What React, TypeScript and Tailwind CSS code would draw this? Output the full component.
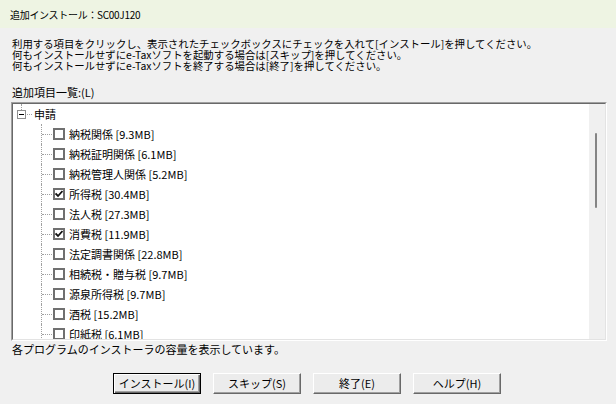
import React from "react";

type Item = { label: string; size: string; checked?: boolean };

const items: Item[] = [
  { label: "納税関係", size: "9.3MB" },
  { label: "納税証明関係", size: "6.1MB" },
  { label: "納税管理人関係", size: "5.2MB" },
  { label: "所得税", size: "30.4MB", checked: true },
  { label: "法人税", size: "27.3MB" },
  { label: "消費税", size: "11.9MB", checked: true },
  { label: "法定調書関係", size: "22.8MB" },
  { label: "相続税・贈与税", size: "9.7MB" },
  { label: "源泉所得税", size: "9.7MB" },
  { label: "酒税", size: "15.2MB" },
  { label: "印紙税", size: "6.1MB" },
];

function CheckBox({ checked }: { checked?: boolean }) {
  return (
    <div className="flex h-[12px] w-[12px] shrink-0 items-center justify-center border-2 border-[#707070] bg-white">
      {checked && (
        <svg width="8" height="8" viewBox="0 0 8 8">
          <path d="M0.5 3.5 L3 6 L7.5 1" fill="none" stroke="#111" strokeWidth="1.8" />
        </svg>
      )}
    </div>
  );
}

function Button({ label, primary }: { label: string; primary?: boolean }) {
  return (
    <button
      className={
        primary
          ? "h-[21px] w-[88px] border border-black bg-[#ececec] text-[11px] leading-none text-black shadow-[inset_1px_1px_0_#ffffff,inset_-1px_-1px_0_#696969,inset_-2px_-2px_0_#a0a0a0]"
          : "h-[21px] w-[88px] border border-t-white border-l-white border-r-[#696969] border-b-[#696969] bg-[#ececec] text-[11px] leading-none text-black shadow-[inset_-1px_-1px_0_#a0a0a0]"
      }
    >
      {label}
    </button>
  );
}

export default function App() {
  return (
    <div
      className="flex h-[404px] w-[616px] flex-col overflow-hidden bg-[#f0f0f0] text-black"
      style={{ fontFamily: '"Noto Sans CJK JP", "Noto Sans", sans-serif' }}
    >
      {/* title bar */}
      <div className="flex h-[28px] shrink-0 items-center bg-[#eef4e3] pl-[10px] text-[10px] tracking-[-0.3px]">
        追加インストール：SC00J120
      </div>

      {/* instructions */}
      <div className="mt-[10px] whitespace-nowrap pl-[12px] text-[10.4px] leading-[11px]">
        <p>利用する項目をクリックし、表示されたチェックボックスにチェックを入れて[インストール]を押してください。</p>
        <p>何もインストールせずにe-Taxソフトを起動する場合は[スキップ]を押してください。</p>
        <p>何もインストールせずにe-Taxソフトを終了する場合は[終了]を押してください。</p>
      </div>

      <div className="mt-[16px] pl-[12px] text-[11px] leading-[11px]">追加項目一覧:(L)</div>

      {/* tree box */}
      <div className="ml-[11px] mt-[4px] h-[239px] w-[596px] shrink-0 border border-t-[#a0a0a0] border-l-[#a0a0a0] border-r-white border-b-white">
        <div className="flex h-full w-full border border-t-[#696969] border-l-[#696969] border-r-[#e3e3e3] border-b-[#e3e3e3] bg-white">
          <div className="flex-1 overflow-hidden text-[11px]">
            {/* root node */}
            <div className="flex h-[20px] items-center pl-[4px]">
              <div className="relative flex h-[9px] w-[9px] items-center justify-center border border-[#8f8f8f] bg-white">
                <div className="absolute bottom-[8px] left-[3px] h-[6px] border-l border-dotted border-[#a0a0a0]" />
                <div className="h-px w-[5px] bg-black" />
              </div>
              <div className="ml-px w-[5px] border-t border-dotted border-[#a0a0a0]" />
              <span className="ml-[2px]">申請</span>
            </div>
            {/* children */}
            {items.map((it) => (
              <div key={it.label} className="flex h-[20px] items-center">
                <div className="w-[28px]" />
                <div className="flex h-full w-[12px] items-center border-l border-dotted border-[#a0a0a0]">
                  <div className="w-[10px] border-t border-dotted border-[#a0a0a0]" />
                </div>
                <CheckBox checked={it.checked} />
                <span className="ml-[4px] whitespace-nowrap">
                  {it.label} [{it.size}]
                </span>
              </div>
            ))}
          </div>
          {/* scrollbar */}
          <div className="w-[16px] bg-[#f0f0f0] pt-[29px]">
            <div className="ml-[6px] h-[75px] w-[2px] rounded-full bg-[#858585]" />
          </div>
        </div>
      </div>

      <div className="mt-[2px] pl-[12px] text-[11px] leading-[12px]">各プログラムのインストーラの容量を表示しています。</div>

      <div className="ml-[113px] mt-[18px] flex gap-[12px]">
        <Button label="インストール(I)" primary />
        <Button label="スキップ(S)" />
        <Button label="終了(E)" />
        <Button label="ヘルプ(H)" />
      </div>
    </div>
  );
}
